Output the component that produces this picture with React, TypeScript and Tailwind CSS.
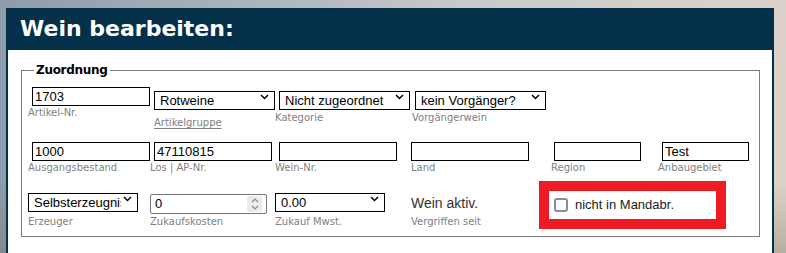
import React from "react";

const label = "block text-[10px] leading-[14px] text-[#808080] whitespace-nowrap [font-family:'DejaVu_Sans',sans-serif]";
const field = "h-[19px] border border-black bg-white text-[13px] leading-[17px] text-black [font-family:'Liberation_Sans',Arial,sans-serif] outline-none";

function Chevron() {
  return (
    <svg
      width="9"
      height="6"
      viewBox="0 0 9 6"
      className="pointer-events-none absolute right-[6px] top-[7px]"
    >
      <path d="M1 1 L4.5 4.5 L8 1" fill="none" stroke="#000" strokeWidth="1.5" />
    </svg>
  );
}

function Sel({ w, value, cls = "" }: { w: string; value: string; cls?: string }) {
  return (
    <div className={`relative ${w} ${cls}`}>
      <select
        defaultValue={value}
        className={`${field} w-full appearance-none pl-[5px] pr-[16px] py-0 rounded-none`}
      >
        <option>{value}</option>
      </select>
      <Chevron />
    </div>
  );
}

function Inp({ w, value = "", cls = "" }: { w: string; value?: string; cls?: string }) {
  return (
    <input
      type="text"
      defaultValue={value}
      className={`${field} ${w} ${cls} block px-[2px] py-0`}
    />
  );
}

export default function App() {
  return (
    <div className="w-[786px] h-[253px] overflow-hidden pt-[8px] pl-[6px] bg-[linear-gradient(90deg,#8d9cab_0%,#a9b3bb_30%,#c9cacb_60%,#dbd3c9_100%)] relative">
      <div className="absolute inset-x-0 bottom-0 h-[70px] bg-[linear-gradient(180deg,rgba(0,0,0,0)_0%,rgba(110,105,90,0.35)_100%)]" />
      <div className="relative w-[768px] h-[260px] border-x-2 border-[#05304a] bg-white">
        <div className="h-[42px] bg-[#05304a] flex items-center pl-[12px] pb-[1px]">
          <h1 className="text-white text-[22px] font-bold leading-none [font-family:'DejaVu_Sans',Verdana,sans-serif]">
            Wein bearbeiten:
          </h1>
        </div>
        <fieldset className="mt-[12px] ml-[13px] mr-[12px] border border-[#7a7a7a] pb-[7px] pl-[6px]">
          <legend className="ml-[6px] px-[2px] text-[12px] leading-[16px] font-bold text-black [font-family:'DejaVu_Sans',Verdana,sans-serif] tracking-[-0.3px]">
            Zuordnung
          </legend>
          {/* Row 1 */}
          <div className="flex items-start h-[64px] pt-[9px]">
            <div className="w-[122px]">
              <Inp w="w-[118px]" value="1703" cls="ml-[4px]" />
              <span className={label}>Artikel-Nr.</span>
            </div>
            <div className="w-[125px]">
              <Sel w="w-[121px]" value="Rotweine" cls="ml-[4px]" />
              <a className={`${label} ml-[4px] mt-[5px] underline underline-offset-[2px]`}>Artikelgruppe</a>
            </div>
            <div className="w-[136px]">
              <Sel w="w-[131px]" value="Nicht zugeordnet" cls="ml-[4px]" />
              <span className={label}>Kategorie</span>
            </div>
            <div className="w-[140px]">
              <Sel w="w-[131px]" value="kein Vorgänger?" cls="ml-[4px]" />
              <span className={`${label} ml-[1px]`}>Vorgängerwein</span>
            </div>
          </div>
          {/* Row 2 */}
          <div className="flex items-start h-[39px]">
            <div className="w-[122px]">
              <Inp w="w-[118px]" value="1000" cls="ml-[4px]" />
              <span className={label}>Ausgangsbestand</span>
            </div>
            <div className="w-[125px]">
              <Inp w="w-[118px]" value="47110815" cls="ml-[4px]" />
              <span className={label}>Los | AP-Nr.</span>
            </div>
            <div className="w-[136px]">
              <Inp w="w-[118px]" cls="ml-[4px]" />
              <span className={label}>Wein-Nr.</span>
            </div>
            <div className="w-[140px]">
              <Inp w="w-[118px]" />
              <span className={label}>Land</span>
            </div>
            <div className="w-[107px]">
              <Inp w="w-[87px]" cls="ml-[3px]" />
              <span className={label}>Region</span>
            </div>
            <div className="w-[95px]">
              <Inp w="w-[87px]" value="Test" cls="ml-[4px]" />
              <span className={label}>Anbaugebiet</span>
            </div>
          </div>
          {/* Row 3 */}
          <div className="flex items-end">
            <div className="w-[122px]">
              <Sel w="w-[110px]" value="Selbsterzeugnisse" />
              <span className={`${label} mt-[2px]`}>Erzeuger</span>
            </div>
            <div className="w-[125px]">
              <div className="w-[117px] h-[20px] border border-[#767676] rounded-[2px] bg-white flex items-center">
                <input
                  type="text"
                  defaultValue="0"
                  className="w-[90px] pl-[4px] text-[13px] leading-[16px] text-black [font-family:'Liberation_Sans',Arial,sans-serif] outline-none bg-transparent"
                />
                <span className="ml-auto mr-[4px] w-[15px] h-[16px] bg-[#ececec] rounded-[2px] flex flex-col items-center justify-center gap-[2px]">
                  <svg width="8" height="5" viewBox="0 0 8 5">
                    <path d="M1 4 L4 1 L7 4" fill="none" stroke="#8a8a8a" strokeWidth="1.2" />
                  </svg>
                  <svg width="8" height="5" viewBox="0 0 8 5">
                    <path d="M1 1 L4 4 L7 1" fill="none" stroke="#8a8a8a" strokeWidth="1.2" />
                  </svg>
                </span>
              </div>
              <span className={`${label} mt-[1px]`}>Zukaufskosten</span>
            </div>
            <div className="w-[136px]">
              <Sel w="w-[110px]" value="0.00" />
              <span className={`${label} mt-[2px]`}>Zukauf Mwst.</span>
            </div>
            <div className="w-[128px]">
              <div className="h-[19px] text-[14px] leading-[19px] text-[#333] [font-family:'Liberation_Sans',Arial,sans-serif]">
                Wein aktiv.
              </div>
              <span className={`${label} mt-[2px]`}>Vergriffen seit</span>
            </div>
            <div className="w-[187px] h-[48px] border-[10px] border-[#ed1c24] bg-white flex items-center pl-[5px]">
              <input
                type="checkbox"
                className="appearance-none w-[14px] h-[14px] border-2 border-[#8b8b96] rounded-[3px] bg-white m-0"
              />
              <span className="ml-[7px] text-[13px] leading-[16px] text-[#222] [font-family:'Liberation_Sans',Arial,sans-serif] whitespace-nowrap">
                nicht in Mandabr.
              </span>
            </div>
          </div>
        </fieldset>
      </div>
    </div>
  );
}
